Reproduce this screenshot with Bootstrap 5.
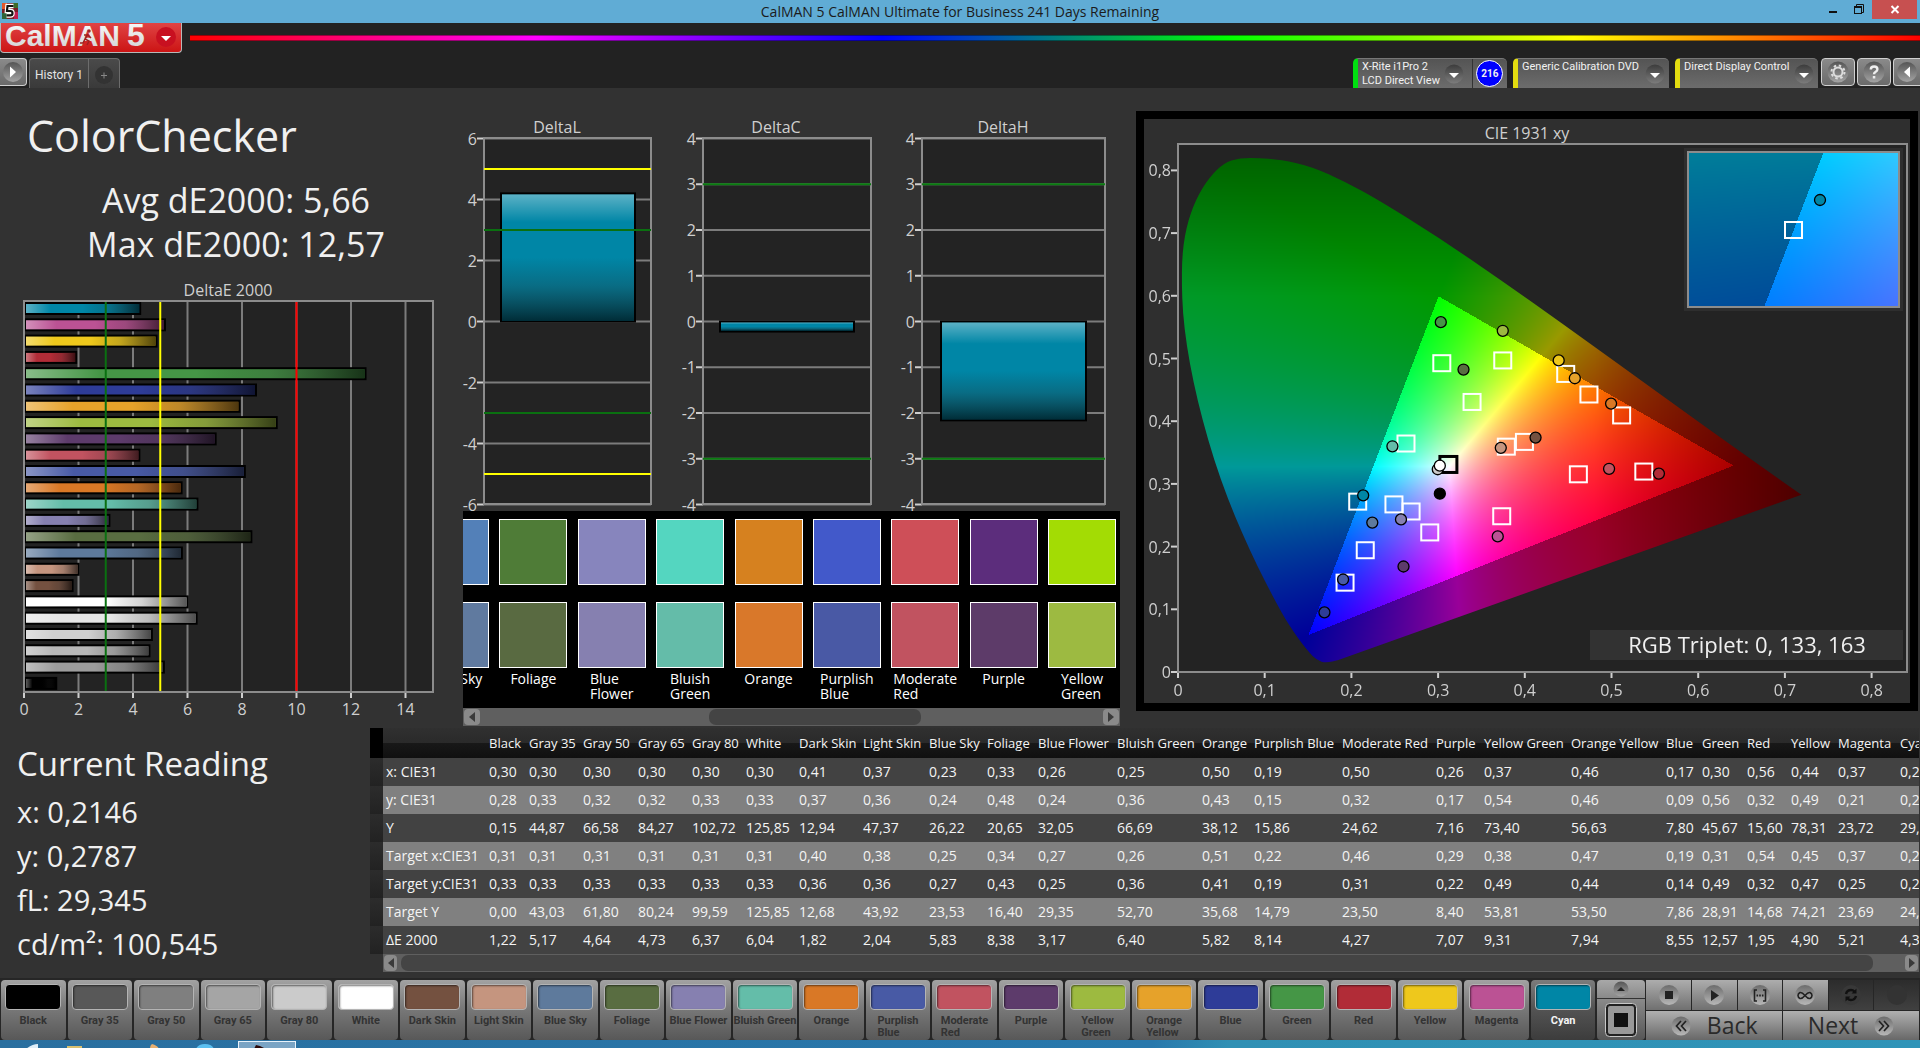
<!DOCTYPE html>
<html lang="en">
<head>
<meta charset="utf-8">
<meta name="viewport" content="width=device-width, initial-scale=1">
<title>CalMAN 5 CalMAN Ultimate for Business</title>
<link href="https://cdn.jsdelivr.net/npm/bootstrap@5.3.0/dist/css/bootstrap.min.css" rel="stylesheet">
<style>
:root { --panel: #323232; --well: #222222; --ink: #f0f0f0; --soft: #cfcfcf; }
body { font-family: "Open Sans", "Noto Sans", sans-serif; background: var(--panel); color: var(--ink); overflow-x: hidden; }
button { font-family: inherit; }
svg { display: block; overflow: visible; }
svg text { font-family: "Open Sans", "Noto Sans", sans-serif; fill: var(--soft); }

.titlebar { background: #60acd5; height: 23px; color: #1b1b1b; font-size: 14px; line-height: 24px; }
.titlebar .side { flex: 1 1 0; }
.winbtn { border: 0; background: none; padding: 0; width: 26px; height: 19px; }
.winbtn.close-win { width: 45px; background: #c75050; margin-right: 3px; }
.winbtn svg { margin: auto; }

.brandrow { background: var(--well); height: 35px; }
.logo-btn { border: 1px solid #b8b8b8; border-top: 0; border-radius: 0 0 4px 4px; padding: 0; width: 182px; height: 30px; background: linear-gradient(#e04444, #cc1414); }
.logo-btn text { font-family: "Liberation Sans", Arial, sans-serif; font-weight: 700; fill: url(#silver); }
.rainbow { height: 6px; margin-top: 12px; border-top: 1px solid #00000066; border-bottom: 1px solid #00000066; background: linear-gradient(90deg, #f00, #f0f 20%, #00f 40%, #0f0 60%, #ff0 80%, #f00); }

.tabrow { background: var(--well); height: 30px; font-family: Roboto, "Open Sans", sans-serif; }
.bar-left { gap: 2px; }
.bar-right { gap: 6px; }
.knobs { gap: 2px; margin-left: -3px; }
.knob { border: 1px solid #d0d0d0; border-radius: 4px; background: linear-gradient(#8a8a8a, #6a6a6a); width: 34px; height: 28px; padding: 0; }
.knob svg { margin: auto; }
.knob.edge-left { width: 27px; border-left: 0; border-radius: 0 4px 4px 0; }
.knob.edge-right { width: 27px; border-right: 0; border-radius: 4px 0 0 4px; }
.tabgroup { border: 1px solid #6c6c6c; border-bottom: 0; border-radius: 4px 4px 0 0; background: linear-gradient(#4a4a4a, #3a3a3a); }
.tabgroup button { border: 0; background: none; color: #e4e4e4; font-size: 12px; padding: 2px 5px 0; }
.tabgroup button + button { border-left: 1px solid #6c6c6c; padding: 2px 6px 0; }
.source { border-radius: 5px 5px 0 0; background: linear-gradient(#545454, #6c6c6c); border-top: 1px solid #777; border-left: 5px solid #e3dc10; overflow: hidden; height: 30px; }
.source.meter { border-left-color: #00e010; width: 154px; }
.source.pattern { width: 156px; }
.source.display { width: 143px; }
.source button { border: 0; background: none; color: #f2f2f2; font-size: 11px; line-height: 14px; padding: 0 8px 0 4px; }
.source button span { padding-top: 1px; }
.source select { appearance: none; border: 0; background: none; color: #f2f2f2; font-size: 11px; line-height: 14px; padding: 0 4px 13px 4px; min-width: 0; }
.source .arrow { pointer-events: none; }
.count { width: 27px; height: 27px; border-radius: 50%; border: 1px solid #fff; background: #00f; font-size: 10px; font-weight: 700; }
.count-cell { border-left: 1px solid #333; }

.col-left { flex: 460 1 0; min-width: 0; }
.col-mid { flex: 660 1 0; min-width: 0; }
.col-right { flex: 800 1 0; min-width: 0; }
.frame-pad { padding: 23px 2px 17px 16px; }
.headline { font-size: 43px; line-height: 60px; font-weight: 400; margin: 18px 0 12px 27px; }
.summary { font-size: 34px; line-height: 44px; padding-left: 12px; margin-bottom: 14px; }
.t16 { font-size: 16px; }
.frame { border: 8px solid #000; background: #2f2f2f; }
.t22 { font-size: 22px; }

.strip { background: #000; overflow: hidden; height: 197px; padding: 8px 4px 0 0; margin-left: 3px; }
.track { margin-left: -42px; }
.patch { flex: 0 0 68px; font-size: 14px; line-height: 15px; color: #fff; }
.chip { height: 66px; width: 68px; border: 1px solid #fff; }
.chip + .chip { margin-top: 17px; margin-bottom: 3px; }
.hscroll { background: #5f5f5f; height: 18px; padding: 1px; }
.hscroll button { border: 0; border-radius: 4px; background: #8a8a8a; width: 16px; height: 16px; padding: 0; }
.hscroll button svg { margin: auto; }
.strip-scroll { margin-left: 3px; }
.thumb { background: #444; border-radius: 7px; height: 16px; }
.lead-space { flex: 229 1 0; } .mid-space { flex: 212 1 0; } .tail-space { flex: 182 1 0; }
.wide-thumb { flex: 1480 1 0; } .wide-tail { flex: 24 1 0; }

.reading { flex: 370 1 0; min-width: 0; }
.reading-pad { padding: 12px 0 0 17px; }
.reading h2 { font-size: 33px; line-height: 48px; font-weight: 400; margin: 0 0 2px; }
.reading p { font-size: 29px; line-height: 44px; margin: 0; }
.sheet { flex: 1550 1 0; min-width: 0; }
.sheet-clip { overflow: hidden; margin-right: 1px; }
.sheet table { table-layout: fixed; border-collapse: collapse; font-size: 14px; line-height: 20px; color: #f4f4f4; }
.sheet th, .sheet td { padding: 4px 0 4px 3px; white-space: nowrap; font-weight: 400; overflow: visible; }
.sheet thead tr { background: linear-gradient(#303030, #2a2a2a 50%, #181818 50%, #101010); }
.sheet thead th { font-size: 13px; line-height: 20px; padding: 5px 0 5px 3px; }
.sheet tbody tr { background: #424242; }
.sheet tbody tr:nth-child(even) { background: #808080; }
.sheet thead .gutter { background: #000; }
.sheet tbody .gutter { background: linear-gradient(#2c2c2c, #222); }
.sheet .hscroll { margin-left: 13px; margin-right: 1px; }
.sheet .hscroll button { width: 13px; }

.dock { background: linear-gradient(#323232 5px, #262626 5px); font-family: Roboto, "Open Sans", sans-serif; padding-top: 7px; }
.tiles { flex: 1596 1 0; gap: 2px; min-width: 0; padding-left: 1px; padding-right: 2px; }
.tile { flex: 1 1 0; min-width: 0; height: 60px; border: 0; border-radius: 4px; padding: 4px 0 0; background: linear-gradient(#a2a2a2, #7a7a7a 45%, #585858); color: #333; font-size: 11px; font-weight: 700; line-height: 12px; }
.tile.active { background: linear-gradient(#7c7c7c, #555 45%, #3c3c3c); color: #f4f4f4; }
.well { width: 56px; height: 26px; border: 1px solid #b4b4b4; border-radius: 4px; box-shadow: inset 1px 1px 2px #0008; margin-bottom: 5px; }
.tile .caption { white-space: nowrap; text-align: left; }
.stepper { width: 48px; height: 60px; border-radius: 4px; overflow: hidden; background: #333; gap: 1px; }
.stepper button { border: 0; padding: 0; background: linear-gradient(#a8a8a8, #8a8a8a); height: 18px; }
.stepper button + button { background: linear-gradient(#8a8a8a, #565656); height: 41px; }
.stepper svg { margin: auto; }
.transport { flex: 273 1 0; gap: 1px; margin-left: 1px; padding-right: 1px; }
.transport .keys { gap: 1px; }
.key { flex: 1 1 0; min-width: 0; border: 0; padding: 0; height: 30px; background: linear-gradient(#adadad, #707070); }
.key svg { margin: auto; }
.key.off { background: linear-gradient(#2c2c2c, #404040); }
.step { flex: 1 1 0; border: 0; padding: 0; height: 29px; background: linear-gradient(#b0b0b0, #686868); color: #2a2a2a; font-family: "Open Sans", "Noto Sans", sans-serif; font-weight: 500; font-size: 23px; line-height: 29px; gap: 16px; }
.taskbar { height: 8px; background: linear-gradient(100deg, #2a6f9f, #2878ac 60%, #3090b4 64%, #2f94b8); overflow: hidden; }
</style>
</head>
<body class="d-flex flex-column min-vh-100">

<svg width="0" height="0" class="position-absolute" aria-hidden="true">
  <defs>
    <linearGradient id="silver" x1="0" y1="0" x2="0" y2="1"><stop offset="0" stop-color="#fff"/><stop offset="1" stop-color="#cfcfcf"/></linearGradient>
    <linearGradient id="disc" x1="0" y1="0" x2="0" y2="1"><stop offset="0" stop-color="#555"/><stop offset="1" stop-color="#a4a4a4"/></linearGradient>
    <linearGradient id="discDark" x1="0" y1="0" x2="0" y2="1"><stop offset="0" stop-color="#3c3c3c"/><stop offset="1" stop-color="#7c7c7c"/></linearGradient>
    <linearGradient id="discPale" x1="0" y1="0" x2="0" y2="1"><stop offset="0" stop-color="#6c6c6c"/><stop offset="1" stop-color="#b8b8b8"/></linearGradient>
    <linearGradient id="shadeH"><stop offset="0" stop-color="#fff" stop-opacity=".36"/><stop offset=".22" stop-color="#fff" stop-opacity="0"/><stop offset=".5" stop-color="#000" stop-opacity="0"/><stop offset=".72" stop-color="#222" stop-opacity=".2"/><stop offset="1" stop-color="#000" stop-opacity=".66"/></linearGradient>
    <linearGradient id="shadeV" x1="0" y1="0" x2="0" y2="1"><stop offset="0" stop-color="#fff" stop-opacity=".36"/><stop offset=".22" stop-color="#fff" stop-opacity="0"/><stop offset=".5" stop-color="#222" stop-opacity="0"/><stop offset=".72" stop-color="#222" stop-opacity=".25"/><stop offset="1" stop-color="#000" stop-opacity=".66"/></linearGradient>
  </defs>
</svg>

<header>
  <div class="titlebar d-flex align-items-start">
    <div class="side d-flex">
      <svg width="20" height="23" viewBox="0 0 20 23" aria-hidden="true"><rect x="2" y="3" width="16" height="16" fill="#7a1f28"/><path d="M2 3h5v6H2z" fill="#e2572a"/><path d="M13 3h5v5h-5z" fill="#3d6b2a"/><path d="M2 13h5v6H2z" fill="#30643a"/><path d="M14 12h4v7h-4z" fill="#c01c50"/><path d="M13.500 6H7.500l-.5 5h3.500q2 0 2 2.200t-2.200 2.200H6.500" fill="none" stroke="#fff" stroke-width="4.500"/><path d="M13.500 6H7.500l-.5 5h3.500q2 0 2 2.200t-2.200 2.200H6.500" fill="none" stroke="#111" stroke-width="2.200"/></svg>
    </div>
    <div>CalMAN 5 CalMAN Ultimate for Business 241 Days Remaining</div>
    <div class="side d-flex justify-content-end">
      <button class="winbtn" aria-label="Minimize"><svg width="10" height="19"><rect x="1" y="11" width="8" height="2" fill="#111"/></svg></button>
      <button class="winbtn" aria-label="Restore"><svg width="12" height="19" fill="none" stroke="#111"><path d="M3.500 6V4.500h7v8H9"/><rect x="1.500" y="6.500" width="7" height="7"/><path d="M1.500 7.500h7"/></svg></button>
      <button class="winbtn close-win" aria-label="Close"><svg width="10" height="19"><path d="M1.500 6l7 7M8.500 6l-7 7" stroke="#fff" stroke-width="2"/></svg></button>
    </div>
  </div>

  <div class="brandrow d-flex">
    <button class="logo-btn" aria-label="CalMAN 5 menu">
      <svg width="180" height="29" viewBox="1 23 180 29">
        <text x="5" y="46" font-size="30">CalMAN</text>
        <text x="127" y="46" font-size="32">5</text>
        <g fill="none" stroke="#a02020" stroke-width="1.500"><path d="M88 34l-3 5 4 2-2 4M84 35h4l3 3M85 39l-2 4h-3"/><circle cx="89" cy="31" r="1"/></g>
        <circle cx="166" cy="37" r="10" fill="#c81020"/><path d="M161 36h10l-5 5z" fill="#fff"/>
      </svg>
    </button>
    <div class="rainbow flex-grow-1 ms-2"></div>
  </div>

  <div class="tabrow d-flex justify-content-between">
    <div class="bar-left d-flex">
      <button class="knob edge-left" aria-label="Show left panel"><svg width="22" height="22"><circle cx="11" cy="11" r="10" fill="url(#disc)"/><path d="M8 5.500v11l6-5.500z" fill="#fff"/></svg></button>
      <div class="tabgroup d-flex">
        <button>History 1</button>
        <button aria-label="Add tab"><svg width="18" height="20"><circle cx="9" cy="10" r="9" fill="#333"/><path d="M6 10.500h6M9 7.500v6" stroke="#888"/></svg></button>
      </div>
    </div>
    <div class="bar-right d-flex">
      <div class="source meter d-flex">
        <button class="d-flex align-items-start text-start text-nowrap" aria-haspopup="true"><span>X-Rite i1Pro 2<br>LCD Direct View</span><svg class="ms-1" width="20" height="28"><circle cx="10" cy="15" r="9.500" fill="url(#discDark)"/><path d="M5 14h10l-5 5z" fill="#fff"/></svg></button>
        <div class="count-cell d-flex align-items-center flex-grow-1 justify-content-center"><div class="count d-flex align-items-center justify-content-center">216</div></div>
      </div>
      <div class="source pattern d-flex">
        <select class="flex-grow-1" aria-label="Pattern source"><option>Generic Calibration DVD</option></select>
        <svg class="arrow me-1" width="20" height="28"><circle cx="10" cy="15" r="9.500" fill="url(#discDark)"/><path d="M5 14h10l-5 5z" fill="#fff"/></svg>
      </div>
      <div class="source display d-flex">
        <select class="flex-grow-1" aria-label="Display control"><option>Direct Display Control</option></select>
        <svg class="arrow me-1" width="20" height="28"><circle cx="10" cy="15" r="9.500" fill="url(#discDark)"/><path d="M5 14h10l-5 5z" fill="#fff"/></svg>
      </div>
      <div class="knobs d-flex">
        <button class="knob" aria-label="Settings"><svg width="24" height="24"><circle cx="12" cy="12" r="10.500" fill="url(#disc)"/><circle cx="12" cy="12" r="4.500" fill="none" stroke="#ddd" stroke-width="2"/><circle cx="12" cy="12" r="6.500" fill="none" stroke="#ddd" stroke-width="2" stroke-dasharray="2.500 2.600"/></svg></button>
        <button class="knob" aria-label="Help"><svg width="24" height="24"><circle cx="12" cy="12" r="10.500" fill="url(#disc)"/><path d="M8.800 9.500q0-3 3.300-3t3.300 2.700q0 1.500-1.700 2.500t-1.700 2.500" fill="none" stroke="#eee" stroke-width="2.400"/><rect x="10.800" y="16" width="2.500" height="2.500" fill="#eee"/></svg></button>
        <button class="knob edge-right" aria-label="Show right panel"><svg width="22" height="22"><circle cx="11" cy="11" r="10" fill="url(#disc)"/><path d="M14 5.500v11l-6-5.500z" fill="#fff"/></svg></button>
      </div>
    </div>
  </div>
</header>

<main class="flex-grow-1">
  <div class="d-flex">
    <section class="col-left">
      <h1 class="headline">ColorChecker</h1>
      <div class="summary text-center">Avg dE2000: 5,66<br>Max dE2000: 12,57</div>
      <svg id="deltaE" class="w-100 t16" viewBox="0 280 460 448" role="img" aria-label="DeltaE 2000"></svg>
    </section>
    <section class="col-mid">
      <svg id="deltas" class="w-100 t16" viewBox="460 88 660 423" role="img" aria-label="DeltaL, DeltaC, DeltaH"></svg>
      <div class="strip"><div id="strip" class="track d-flex justify-content-between"></div></div>
      <div class="hscroll strip-scroll d-flex align-items-center">
        <button aria-label="Scroll left"><svg width="8" height="12"><path d="M7 1v10L1 6z" fill="#3a3a3a"/></svg></button>
        <div class="lead-space"></div><div class="thumb mid-space"></div><div class="tail-space"></div>
        <button aria-label="Scroll right"><svg width="8" height="12"><path d="M1 1v10l6-5z" fill="#3a3a3a"/></svg></button>
      </div>
    </section>
    <section class="col-right">
      <div class="frame-pad"><div class="frame"><svg id="cie" class="w-100 t16" viewBox="1144 119 766 584" role="img" aria-label="CIE 1931 xy"></svg></div></div>
    </section>
  </div>

  <div class="d-flex">
    <section class="reading">
      <div class="reading-pad">
        <h2>Current Reading</h2>
        <p>x: 0,2146</p>
        <p>y: 0,2787</p>
        <p>fL: 29,345</p>
        <p>cd/m²: 100,545</p>
      </div>
    </section>
    <section class="sheet">
      <div class="sheet-clip"><table id="sheet"></table></div>
      <div class="hscroll d-flex align-items-center gap-1">
        <button aria-label="Scroll left"><svg width="8" height="12"><path d="M7 1v10L1 6z" fill="#3a3a3a"/></svg></button>
        <div class="thumb wide-thumb"></div><div class="wide-tail"></div>
        <button aria-label="Scroll right"><svg width="8" height="12"><path d="M1 1v10l6-5z" fill="#3a3a3a"/></svg></button>
      </div>
    </section>
  </div>
</main>

<footer>
  <div class="dock d-flex">
    <div id="tiles" class="tiles d-flex"></div>
    <div class="stepper d-flex flex-column">
      <button aria-label="Expand"><svg width="16" height="16"><circle cx="8" cy="8" r="7.500" fill="url(#disc)"/><path d="M4 10h8L8 6z" fill="#222"/></svg></button>
      <button aria-label="Pattern window"><svg width="34" height="36"><rect x="1.500" y="1.500" width="31" height="33" rx="4" fill="#222" stroke="#c8c8c8"/><rect x="4" y="4" width="26" height="28" rx="2" fill="#999"/><rect x="10" y="11" width="14" height="14" fill="#111"/></svg></button>
    </div>
    <div class="transport d-flex flex-column">
      <div class="keys d-flex">
        <button class="key" aria-label="Stop"><svg width="22" height="22"><circle cx="11" cy="11" r="10" fill="url(#discPale)"/><rect x="7" y="7" width="8" height="8" fill="#222"/></svg></button>
        <button class="key" aria-label="Play"><svg width="22" height="22"><circle cx="11" cy="11" r="10" fill="url(#discPale)"/><path d="M8 6v11l8-5.500z" fill="#222"/></svg></button>
        <button class="key" aria-label="Read series"><svg width="22" height="22"><circle cx="11" cy="11" r="10" fill="url(#discPale)"/><path d="M8 6H5.500v11H8M14 6h2.500v11H14" fill="none" stroke="#222" stroke-width="1.600"/><path d="M7.500 11.500h7" stroke="#222" stroke-width="1.800" stroke-dasharray="1.600 1.100"/></svg></button>
        <button class="key" aria-label="Read continuously"><svg width="22" height="22"><circle cx="11" cy="11" r="10" fill="url(#discPale)"/><path d="M11 11.500q-3-3.500-5-3-2 1-2 3t2 3q2 .5 5-3t5-3q2 1 2 3t-2 3q-2 .5-5-3z" fill="none" stroke="#222" stroke-width="1.600"/></svg></button>
        <button class="key off" aria-label="Repeat"><svg width="22" height="22"><circle cx="11" cy="11" r="10" fill="#383838"/><path d="M6 10q1-4 5-4 2 0 3.500 1.500M16 12q-1 4-5 4-2 0-3.500-1.500" fill="none" stroke="#111" stroke-width="2.400"/><path d="M16.500 4.500v5h-5zM5.500 17.500v-5h5z" fill="#111"/></svg></button>
        <button class="key off" aria-label="Record"><svg width="22" height="22"><circle cx="11" cy="11" r="10" fill="#333"/></svg></button>
      </div>
      <div class="keys d-flex">
        <button class="step d-flex align-items-center justify-content-center"><svg width="20" height="20"><circle cx="10" cy="10" r="9.500" fill="url(#discPale)"/><path d="M10 5l-4.500 5 4.500 5M15 5l-4.500 5 4.500 5" fill="none" stroke="#222" stroke-width="1.700"/></svg>Back</button>
        <button class="step d-flex align-items-center justify-content-center">Next<svg width="20" height="20"><circle cx="10" cy="10" r="9.500" fill="url(#discPale)"/><path d="M5 5l4.500 5L5 15M10 5l4.500 5-4.500 5" fill="none" stroke="#222" stroke-width="1.700"/></svg></button>
      </div>
    </div>
  </div>
  <div class="taskbar">
    <svg width="300" height="9" aria-hidden="true"><path d="M26 9q6-5 12-5v5z" fill="#dfeef8"/><rect x="67" y="6" width="15" height="3" fill="#d8c070"/><path d="M150 9q0-4 2-5 6 2 7 5z" fill="#e8b070"/><path d="M196 9q2-5 9-5t9 5z" fill="#5cc0f0"/><rect x="238.500" y="1.500" width="57" height="9" fill="#7aa4c4" stroke="#e8f2fa"/><path d="M254 9l2-4 4 1 6 3z" fill="#2a0808"/></svg>
  </div>
</footer>

<script src="https://cdn.jsdelivr.net/npm/bootstrap@5.3.0/dist/js/bootstrap.bundle.min.js"></script>
<script>
// name, target colour, dE2000, table column width, chart colour where it differs
const patches = [
  ['Black', '#000000', 1.22, 40], ['Gray 35', '#585858', 5.17, 54, '#9c9c9c'], ['Gray 50', '#7f7f7f', 4.64, 55, '#b8b8b8'],
  ['Gray 65', '#a5a5a5', 4.73, 54, '#d0d0d0'], ['Gray 80', '#cbcbcb', 6.37, 54, '#e6e6e6'], ['White', '#ffffff', 6.04, 53],
  ['Dark Skin', '#745140', 1.82, 64], ['Light Skin', '#c5957f', 2.04, 66], ['Blue Sky', '#5e7a9c', 5.83, 58],
  ['Foliage', '#596d41', 8.38, 51], ['Blue Flower', '#8680b0', 3.17, 79], ['Bluish Green', '#64bda9', 6.40, 85],
  ['Orange', '#d97826', 5.82, 52], ['Purplish Blue', '#485aa5', 8.14, 88], ['Moderate Red', '#c15360', 4.27, 94],
  ['Purple', '#5d3b6b', 7.07, 48], ['Yellow Green', '#9dba40', 9.31, 87], ['Orange Yellow', '#e6a22a', 7.94, 95],
  ['Blue', '#2e3c98', 8.55, 36], ['Green', '#459646', 12.57, 45], ['Red', '#b12c37', 1.95, 44],
  ['Yellow', '#eec81c', 4.90, 47], ['Magenta', '#bb5294', 5.21, 62], ['Cyan', '#0086a6', 4.30, 60]
];
const table = {
  'x: CIE31': '0,30 0,30 0,30 0,30 0,30 0,30 0,41 0,37 0,23 0,33 0,26 0,25 0,50 0,19 0,50 0,26 0,37 0,46 0,17 0,30 0,56 0,44 0,37 0,21',
  'y: CIE31': '0,28 0,33 0,32 0,32 0,33 0,33 0,37 0,36 0,24 0,48 0,24 0,36 0,43 0,15 0,32 0,17 0,54 0,46 0,09 0,56 0,32 0,49 0,21 0,28',
  'Y': '0,15 44,87 66,58 84,27 102,72 125,85 12,94 47,37 26,22 20,65 32,05 66,69 38,12 15,86 24,62 7,16 73,40 56,63 7,80 45,67 15,60 78,31 23,72 29,35',
  'Target x:CIE31': '0,31 0,31 0,31 0,31 0,31 0,31 0,40 0,38 0,25 0,34 0,27 0,26 0,51 0,22 0,46 0,29 0,38 0,47 0,19 0,31 0,54 0,45 0,37 0,21',
  'Target y:CIE31': '0,33 0,33 0,33 0,33 0,33 0,33 0,36 0,36 0,27 0,43 0,25 0,36 0,41 0,19 0,31 0,22 0,49 0,44 0,14 0,49 0,32 0,47 0,25 0,27',
  'Target Y': '0,00 43,03 61,80 80,24 99,59 125,85 12,68 43,92 23,53 16,40 29,35 52,70 35,68 14,79 23,50 8,40 53,81 53,50 7,86 28,91 14,68 74,21 23,69 24,36',
  'ΔE 2000': '1,22 5,17 4,64 4,73 6,37 6,04 1,82 2,04 5,83 8,38 3,17 6,40 5,82 8,14 4,27 7,07 9,31 7,94 8,55 12,57 1,95 4,90 5,21 4,30'
};
const byId = id => document.getElementById(id);
const line = (x1, y1, x2, y2, stroke, w = 2) => `<line x1="${x1}" y1="${y1}" x2="${x2}" y2="${y2}" stroke="${stroke}" stroke-width="${w}"/>`;
const bar = (x, y, w, h, fill, shade) => `<rect x="${x}" y="${y}" width="${w}" height="${h}" fill="${fill}" stroke="#000" stroke-width="2"/><rect x="${x + 1}" y="${y + 1}" width="${w - 2}" height="${h - 2}" fill="url(#${shade})"/>`;
const label = (x, y, text, anchor = 'middle') => `<text x="${x}" y="${y}" text-anchor="${anchor}">${text}</text>`;

// horizontal DeltaE bars
(() => {
  const X = v => 24 + v * 27.25;
  let s = label(228, 296, 'DeltaE 2000') + '<rect x="24" y="301" width="409" height="391" fill="#232323"/>';
  for (let v = 2; v < 15; v += 2) s += line(X(v), 301, X(v), 692, '#7c7c7c');
  [...patches].reverse().forEach((p, i) => { s += bar(25, 303 + i * 16.3, X(p[2]) - 26, 11, p[4] || p[1], 'shadeH'); });
  s += line(X(3), 301, X(3), 692, '#0a7010') + line(X(5), 301, X(5), 692, '#ffff00') + line(X(10), 301, X(10), 692, '#ff0000');
  s += '<rect x="24" y="301" width="409" height="391" fill="none" stroke="#8c8c8c" stroke-width="2"/>';
  for (let v = 0; v < 15; v += 2) s += line(X(v), 693, X(v), 698, '#cfcfcf') + label(X(v), 715, v);
  byId('deltaE').innerHTML = s;
})();

// DeltaL, DeltaC and DeltaH columns
(() => {
  const charts = [
    { name: 'DeltaL', x: 484, w: 167, mid: 557, max: 6, step: 2, value: 4.2, bar: [501, 134], limits: [[5, '#ffff00'], [3, '#0a7010']] },
    { name: 'DeltaC', x: 703, w: 168, mid: 776, max: 4, step: 1, value: -.22, bar: [720, 134], limits: [[3, '#0a7c10']] },
    { name: 'DeltaH', x: 922, w: 183, mid: 1003, max: 4, step: 1, value: -2.16, bar: [941, 145], limits: [[3, '#0a7c10']] }
  ];
  let s = '';
  for (const c of charts) {
    const Y = v => 321.5 - v * 183 / c.max, x2 = c.x + c.w;
    s += label(c.mid, 133, c.name) + `<rect x="${c.x}" y="138" width="${c.w}" height="366" fill="#232323"/>`;
    for (let v = -c.max; v <= c.max; v += c.step) s += line(c.x, Y(v), x2, Y(v), '#7c7c7c') + line(c.x - 7, Y(v), c.x, Y(v), '#cfcfcf') + label(c.x - 7, Y(v) + 6, v, 'end');
    s += bar(c.bar[0], Math.min(Y(0), Y(c.value)), c.bar[1], Math.abs(Y(0) - Y(c.value)), '#0086a6', 'shadeV');
    s += `<rect x="${c.x}" y="138" width="${c.w}" height="366" fill="none" stroke="#8c8c8c" stroke-width="2"/>`;
    for (const [v, col] of c.limits) s += line(c.x, Y(v), x2, Y(v), col) + line(c.x, Y(-v), x2, Y(-v), col);
  }
  byId('deltas').innerHTML = s;
})();

// measured over target swatches
byId('strip').innerHTML = [
  ['Blue Sky', '#5380b8', '#607a9f'], ['Foliage', '#4f7c37', '#596a41'], ['Blue<br>Flower', '#8785bd', '#8680b0'],
  ['Bluish<br>Green', '#54d6c0', '#64bca9'], ['Orange', '#d6811f', '#d9782a'], ['Purplish<br>Blue', '#4259ca', '#4959a5'],
  ['Moderate<br>Red', '#ce4f58', '#c15360'], ['Purple', '#5c2d7c', '#5d3b69'], ['Yellow<br>Green', '#a3dc04', '#9dba41']
].map(([n, a, b]) => `<div class="patch d-flex flex-column align-items-center"><div class="chip" style="background:${a}"></div><div class="chip" style="background:${b}"></div><div class="text-nowrap">${n}</div></div>`).join('');

// data table
(() => {
  let s = '<colgroup><col style="width:13px"><col style="width:103px">' + patches.map(p => `<col style="width:${p[3]}px">`).join('') + '</colgroup>';
  s += '<thead><tr><th class="gutter"></th><th></th>' + patches.map(p => `<th scope="col">${p[0]}</th>`).join('') + '</tr></thead><tbody>';
  for (const [name, row] of Object.entries(table)) s += `<tr><td class="gutter"></td><th scope="row">${name}</th>` + row.split(' ').map(v => `<td>${v}</td>`).join('') + '</tr>';
  byId('sheet').innerHTML = s + '</tbody>';
  byId('sheet').style.width = 116 + patches.reduce((t, p) => t + p[3], 0) + 'px';
})();

// patch picker
byId('tiles').innerHTML = patches.map(([n, c]) => {
  const two = ['Purplish Blue', 'Moderate Red', 'Yellow Green', 'Orange Yellow'].includes(n);
  return `<button class="tile d-flex flex-column align-items-center${n === 'Cyan' ? ' active' : ''}"><span class="well" style="background:${c}"></span><span class="caption">${two ? n.replace(' ', '<br>') : n}</span></button>`;
}).join('');

// chromaticity diagram
(() => {
  const X = x => 1178 + x * 867, Y = y => 672 - y * 627;
  const ramp = (v, a, b) => Math.min(1, Math.max(0, (v - a) / (b - a)));
  function shade(x, y) {
    y = Math.max(y, .001);
    const A = x / y, C = (1 - x - y) / y;
    const rgb = [3.2406 * A - 1.5372 - .4986 * C, -.9689 * A + 1.8758 + .0415 * C, .0557 * A - .2040 + 1.0570 * C];
    const inside = Math.min(...rgb) >= 0;
    const top = Math.max(...rgb);
    const k = (inside ? 1 : .6) * (1 - .35 * ramp(y, .6, .82)) * (1 - .5 * ramp(x, .48, .72));
    return rgb.map(v => 255 * k * Math.max(0, v) / top);
  }
  function paint(canvas, toX, toY) {
    const ctx = canvas.getContext('2d'), { width: w, height: h } = canvas, img = ctx.createImageData(w, h);
    for (let j = 0; j < h; j++) for (let i = 0; i < w; i++) {
      const c = shade(toX(i), toY(j)), o = 4 * (j * w + i);
      img.data[o] = c[0]; img.data[o + 1] = c[1]; img.data[o + 2] = c[2]; img.data[o + 3] = 255;
    }
    ctx.putImageData(img, 0, 0);
    return ctx;
  }
  const locus = [[.719, .2825], [.627, .3725], [.5752, .4242], [.5125, .4866], [.4441, .5547], [.3731, .6245], [.3016, .6923], [.2296, .7543], [.1929, .7816], [.1547, .8059], [.119, .817], [.09, .82], [.0655, .819], [.049, .8075], [.0317, .781], [.017, .743], [.0073, .696], [.0038, .642], [.0061, .55], [.0215, .434], [.0484, .306], [.083, .192], [.1176, .0985], [.135, .06], [.15, .033], [.16, .0185], [.171, .0145], [.185, .019]];
  const squares = [[.3037, .4925], [.374, .4969], [.4466, .4754], [.4734, .4426], [.5111, .4092], [.3386, .4307], [.2624, .3644], [.3781, .3594], [.399, .367], [.5367, .3197], [.4612, .3153], [.2067, .2717], [.2485, .2673], [.2683, .256], [.2898, .2226], [.3728, .2484], [.2154, .1942], [.1921, .1425]];
  const dots = [[.3031, .558, '#459646'], [.3746, .5442, '#9dba40'], [.3293, .4824, '#596d41'], [.4391, .4969, '#eec81c'], [.4577, .4685, '#e6a22a'], [.4995, .4281, '#d97826'], [.4124, .3739, '#745140'], [.3723, .3575, '#c5957f'], [.4972, .3241, '#c15360'], [.5547, .3165, '#b12c37'], [.2473, .36, '#64bda9'], [.2996, .3234, '#cbcbcb'], [.302, .3291, '#ffffff'], [.302, .2844, '#000000'], [.2136, .2818, '#0086a6'], [.2241, .2383, '#5e7a9c'], [.2572, .2434, '#8680b0'], [.3688, .2162, '#bb5294'], [.2601, .1683, '#5d3b6b'], [.1904, .1475, '#485aa5'], [.1689, .0952, '#2e3c98']];
  const square = (x, y, col = '#fff', w = 2) => `<rect x="${x - 8}" y="${y - 8}" width="17" height="16" fill="none" stroke="${col}" stroke-width="${w}"/>`;
  const dot = (x, y, col) => `<circle cx="${x}" cy="${y}" r="5.500" fill="${col}" stroke="#000" stroke-width="1.300"/>`;

  let s = label(1527, 139, 'CIE 1931 xy') + '<rect x="1178" y="144" width="729" height="528" fill="#232323"/>';
  s += '<foreignObject x="1178" y="144" width="640" height="528"><canvas id="gamut" width="640" height="528"></canvas></foreignObject>';
  s += '<rect x="1178" y="144" width="729" height="528" fill="none" stroke="#8c8c8c" stroke-width="2"/>';
  for (let i = 0; i <= 8; i++) {
    const t = i ? '0,' + i : '0';
    s += line(X(i / 10), 673, X(i / 10), 678, '#cfcfcf') + label(X(i / 10), 696, t);
    s += line(1171, Y(i / 10), 1177, Y(i / 10), '#cfcfcf') + label(1171, Y(i / 10) + 6, t, 'end');
  }
  s += square(X(.3113), Y(.331), '#000', 3) + squares.map(p => square(X(p[0]), Y(p[1]))).join('') + dots.map(p => dot(X(p[0]), Y(p[1]), p[2])).join('');
  s += '<rect x="1684" y="148" width="219" height="163" fill="#2e2e2e"/><foreignObject x="1688" y="152" width="211" height="155"><canvas id="inset" width="211" height="155"></canvas></foreignObject>';
  s += '<rect x="1688" y="152" width="211" height="155" fill="none" stroke="#8c8c8c" stroke-width="2"/>' + square(1793, 230) + dot(1820, 200, '#0086a6');
  s += '<rect x="1590" y="630" width="313" height="30" fill="#323232"/><text class="t22" x="1747" y="653" text-anchor="middle" style="fill:#f0f0f0">RGB Triplet: 0, 133, 163</text>';
  byId('cie').innerHTML = s;

  const gamut = byId('gamut');
  const ctx = paint(gamut, i => i / 867, j => (528 - j) / 627);
  ctx.globalCompositeOperation = 'destination-in';
  ctx.beginPath();
  locus.forEach(([x, y], i) => {
    const n = locus[(i + 1) % locus.length], px = x * 867, py = 528 - y * 627, nx = n[0] * 867, ny = 528 - n[1] * 627;
    if (i === 0) ctx.moveTo(px, py);
    else if (i < locus.length - 1) ctx.quadraticCurveTo(px, py, (px + nx) / 2, (py + ny) / 2);
    else ctx.lineTo(px, py);
  });
  ctx.closePath();
  ctx.fill();
  paint(byId('inset'), i => .2077 + (i - 105) / 3400, j => .2677 - (j - 78) / 2458);
})();
</script>
</body>
</html>
